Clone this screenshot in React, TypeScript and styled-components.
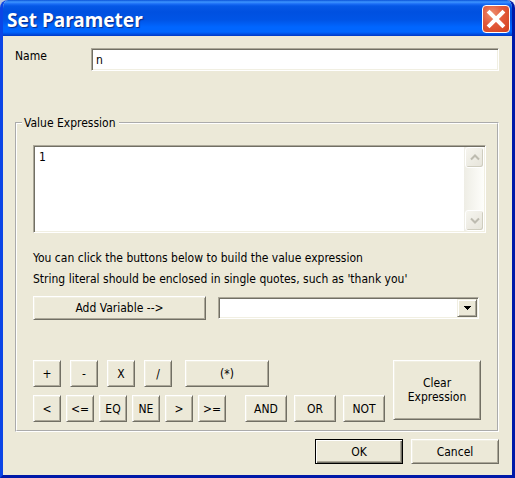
import React, { useState } from 'react';
import styled, { createGlobalStyle, css } from 'styled-components';

const face = '#ece9d8';
const shadow = '#aca899';
const dark = '#716f64';

const GlobalStyle = createGlobalStyle`
  *, *::before, *::after { box-sizing: border-box; }
  body {
    margin: 0;
    background: linear-gradient(to right, #b9c3dc, #f6f2f4);
    color: #000;
    font: 12px/14px "DejaVu Sans Condensed", "DejaVu Sans", Tahoma, sans-serif;
  }
  button, input, select, textarea { font: inherit; color: inherit; margin: 0; }
`;

const sunken = css`
  border: 1px solid;
  border-color: ${shadow} #fff #fff ${shadow};
  box-shadow: inset 1px 1px 0 ${dark}, inset -1px -1px 0 #f1efe2;
  background: #fff;
`;

const Dialog = styled.form`
  overflow: hidden;
  border-radius: 8px 8px 0 0;
  border: 3px solid;
  border-top: 0;
  border-color: #0831d9 #0019a8 #0019a8 #0b45e6;
  background: ${face};
`;

const TitleBar = styled.header`
  display: flex;
  align-items: center;
  justify-content: space-between;
  height: 36px;
  margin: 0 -3px;
  padding: 0 5px 0 7px;
  background: linear-gradient(
    to bottom,
    #0a52d8 0, #3d95ff 2px, #1a6cf5 4px, #0558e6 6px, #0050e0 12px,
    #0054e6 20px, #0066ff 27px, #0066ff 32px, #0050e4 34px, #0038c4 36px
  );
  box-shadow: inset 1px 0 0 #0a3ccc, inset -2px 0 0 #0024b4;
`;

const Title = styled.h1`
  margin: 0;
  padding-top: 4px;
  color: #fff;
  font: bold 19px/26px "Noto Sans", "Open Sans", sans-serif;
  text-shadow: 1px 1px 1px #0a2a88;
`;

const CloseButton = styled.button`
  display: block;
  width: 28px;
  height: 28px;
  margin-top: 2px;
  padding: 0;
  border: 1px solid #fff;
  border-radius: 4px;
  background: radial-gradient(circle at 35% 30%, #ee8f70 0, #e2593a 45%, #d2401c 100%);
  svg { display: block; }
`;

const Body = styled.div`
  padding: 12px 13px 11px 12px;
`;

const NameRow = styled.div`
  display: flex;
  align-items: flex-start;
  label { width: 76px; line-height: 16px; }
`;

const TextInput = styled.input`
  ${sunken}
  flex: 1;
  min-width: 0;
  height: 23px;
  padding: 0 4px;
  border-radius: 0;
  outline: 0;
`;

const Group = styled.fieldset`
  min-width: 0;
  margin: 44px 0 7px;
  padding: 14px 11px 8px 16px;
  border: 2px groove #fff;
  legend { margin-left: -11px; padding: 0 3px 0 2px; line-height: 16px; }
`;

const Editor = styled.div`
  ${sunken}
  display: flex;
  height: 88px;
  padding: 1px;
`;

const ExpressionBox = styled.textarea`
  flex: 1;
  min-width: 0;
  padding: 3px 4px;
  border: 0;
  outline: 0;
  resize: none;
  overflow: hidden;
  background: transparent;
`;

const ScrollTrack = styled.div`
  display: flex;
  flex-direction: column;
  justify-content: space-between;
  width: 20px;
  background: linear-gradient(to right, #eeede5, #fefefb);
`;

const ScrollButton = styled.button`
  display: grid;
  place-items: center;
  height: 21px;
  margin: 0 0 0 1px;
  padding: 0;
  border: 1px solid #fff;
  border-radius: 3px;
  background: linear-gradient(135deg, #f6f5ef, #e6e4da);
  box-shadow: inset -1px -1px 0 #cfcdbf;
`;

const Hint = styled.p`
  margin: 15px 0 6px;
  line-height: 21px;
`;

const VariableRow = styled.div`
  display: flex;
  gap: 12px;
  padding-right: 7px;
`;

const Button = styled.button<{ $w?: number; $h?: number; $default?: boolean; $grow?: boolean }>`
  flex: ${(p) => (p.$grow ? '1' : '0 0 auto')};
  width: ${(p) => (p.$w ? `${p.$w}px` : 'auto')};
  height: ${(p) => (p.$h ? `${p.$h}px` : 'auto')};
  padding: 0;
  border: 1px solid;
  border-radius: 0;
  border-color: ${(p) => (p.$default ? '#000' : `#fff ${dark} ${dark} #fff`)};
  background: ${face};
  box-shadow: ${(p) =>
    p.$default
      ? `inset 1px 1px 0 #fff, inset -1px -1px 0 ${dark}, inset -2px -2px 0 ${shadow}`
      : `inset 1px 1px 0 #f1efe2, inset -1px -1px 0 ${shadow}`};
`;

const ComboBox = styled.div`
  ${sunken}
  flex: 1;
  display: grid;
  height: 22px;
  margin-top: 1px;
  padding: 1px;
`;

const Select = styled.select`
  grid-area: 1 / 1;
  appearance: none;
  width: 100%;
  min-width: 0;
  padding: 0 24px 0 4px;
  border: 0;
  border-radius: 0;
  outline: 0;
  background: transparent;
`;

const ComboArrow = styled.span`
  grid-area: 1 / 1;
  justify-self: end;
  display: grid;
  place-items: center;
  width: 20px;
  border: 1px solid;
  border-color: #f1efe2 ${dark} ${dark} #f1efe2;
  background: ${face};
  box-shadow: inset 1px 1px 0 #fff, inset -1px -1px 0 ${shadow};
  pointer-events: none;
`;

const Keypad = styled.div`
  display: flex;
  gap: 8px;
  margin-top: 40px;
  padding-right: 5px;
`;

const KeyRows = styled.div`
  display: flex;
  flex-direction: column;
  gap: 8px;
  width: 352px;
`;

const KeyRow = styled.div<{ $gap: number }>`
  display: flex;
  gap: ${(p) => p.$gap}px;
`;

const Footer = styled.footer`
  display: flex;
  justify-content: flex-end;
  gap: 8px;
`;

export default function App() {
  const [name, setName] = useState('n');
  const [expr, setExpr] = useState('1');
  const add = (t: string) => () => setExpr((e) => `${e} ${t}`);
  const key = (t: string, w: number) => (
    <Button key={t} type="button" $w={w} $h={27} onClick={add(t)}>{t}</Button>
  );
  return (
    <>
      <GlobalStyle />
      <Dialog onSubmit={(e) => e.preventDefault()}>
        <TitleBar>
          <Title>Set Parameter</Title>
          <CloseButton type="button" aria-label="Close">
            <svg width="26" height="26" viewBox="0 0 26 26">
              <path d="M6.5 6.5 19.5 19.5M19.5 6.5 6.5 19.5" stroke="#fff" strokeWidth="4" strokeLinecap="square" />
            </svg>
          </CloseButton>
        </TitleBar>
        <Body>
          <NameRow>
            <label htmlFor="name">Name</label>
            <TextInput id="name" value={name} onChange={(e) => setName(e.target.value)} />
          </NameRow>
          <Group>
            <legend>Value Expression</legend>
            <Editor>
              <ExpressionBox aria-label="Value Expression" value={expr} onChange={(e) => setExpr(e.target.value)} />
              <ScrollTrack>
                <ScrollButton type="button" aria-label="Scroll up">
                  <svg width="10" height="7" viewBox="0 0 10 7">
                    <path d="M1 5.5 5 1.5 9 5.5" fill="none" stroke="#bdbbb0" strokeWidth="2" />
                  </svg>
                </ScrollButton>
                <ScrollButton type="button" aria-label="Scroll down">
                  <svg width="10" height="7" viewBox="0 0 10 7">
                    <path d="M1 1.5 5 5.5 9 1.5" fill="none" stroke="#bdbbb0" strokeWidth="2" />
                  </svg>
                </ScrollButton>
              </ScrollTrack>
            </Editor>
            <Hint>
              You can click the buttons below to build the value expression
              <br />
              String literal should be enclosed in single quotes, such as 'thank you'
            </Hint>
            <VariableRow>
              <Button type="button" $w={173} $h={24}>Add Variable --&gt;</Button>
              <ComboBox>
                <Select aria-label="Variable" defaultValue="">
                  <option value="" />
                </Select>
                <ComboArrow>
                  <svg width="7" height="4" viewBox="0 0 7 4" shapeRendering="crispEdges">
                    <path d="M0 0H7V1H6V2H5V3H4V4H3V3H2V2H1V1H0Z" />
                  </svg>
                </ComboArrow>
              </ComboBox>
            </VariableRow>
            <Keypad>
              <KeyRows>
                <KeyRow $gap={13}>
                  <KeyRow $gap={9}>{['+', '-', 'X', '/'].map((t) => key(t, 28))}</KeyRow>
                  {key('(*)', 84)}
                </KeyRow>
                <KeyRow $gap={19}>
                  <KeyRow $gap={5}>{['<', '<=', 'EQ', 'NE', '>', '>='].map((t) => key(t, 28))}</KeyRow>
                  <KeyRow $gap={7}>{['AND', 'OR', 'NOT'].map((t) => key(t, 42))}</KeyRow>
                </KeyRow>
              </KeyRows>
              <Button type="button" $grow $h={60} onClick={() => setExpr('')}>
                Clear
                <br />
                Expression
              </Button>
            </Keypad>
          </Group>
          <Footer>
            <Button type="submit" $default $w={88} $h={25}>OK</Button>
            <Button type="button" $w={88} $h={25}>Cancel</Button>
          </Footer>
        </Body>
      </Dialog>
    </>
  );
}
